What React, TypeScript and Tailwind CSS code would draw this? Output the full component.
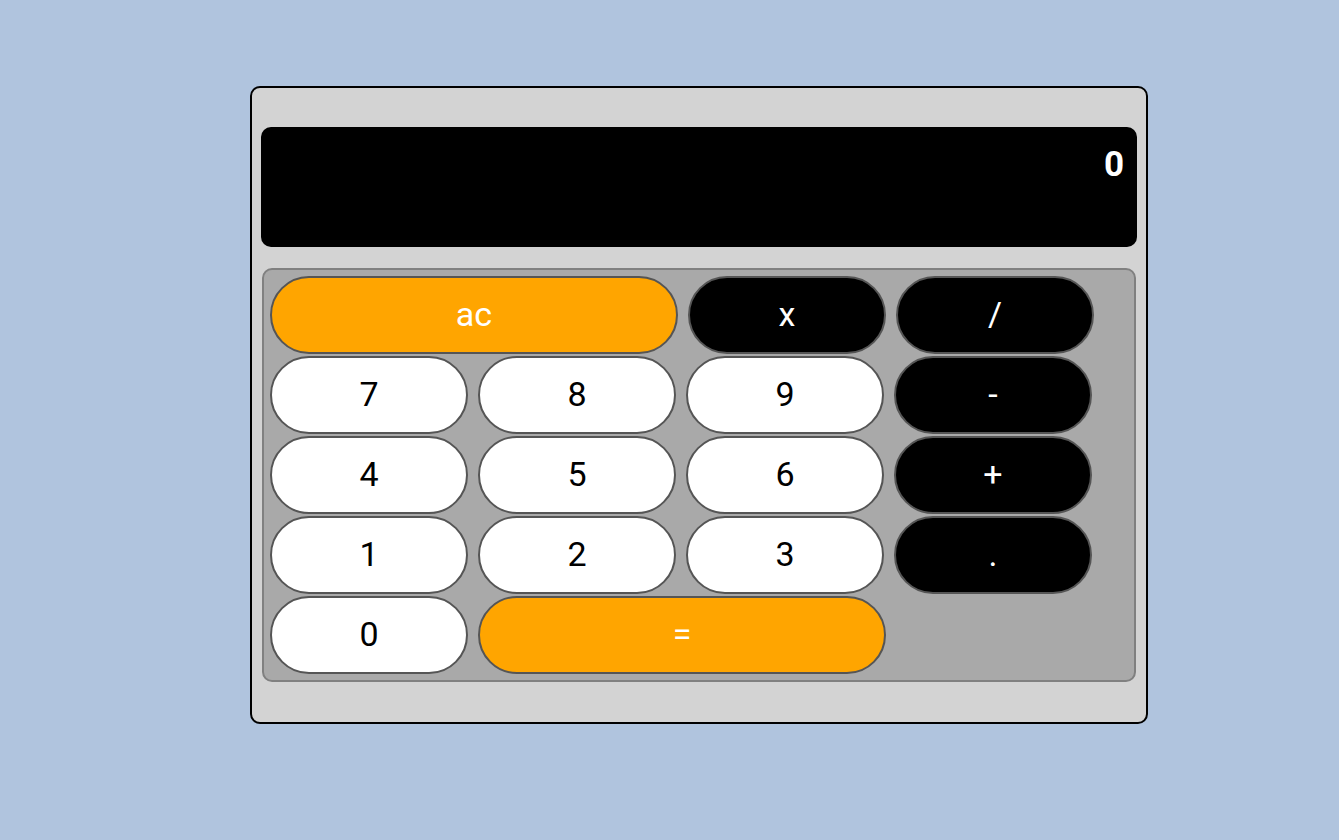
const font = { fontFamily: 'Roboto, "Liberation Sans", sans-serif' };

type Key = { label: string; kind: 'num' | 'op' | 'accent'; wide?: boolean };

const rows: Key[][] = [
  [
    { label: 'ac', kind: 'accent', wide: true },
    { label: 'x', kind: 'op' },
    { label: '/', kind: 'op' },
  ],
  [
    { label: '7', kind: 'num' },
    { label: '8', kind: 'num' },
    { label: '9', kind: 'num' },
    { label: '-', kind: 'op' },
  ],
  [
    { label: '4', kind: 'num' },
    { label: '5', kind: 'num' },
    { label: '6', kind: 'num' },
    { label: '+', kind: 'op' },
  ],
  [
    { label: '1', kind: 'num' },
    { label: '2', kind: 'num' },
    { label: '3', kind: 'num' },
    { label: '.', kind: 'op' },
  ],
  [
    { label: '0', kind: 'num' },
    { label: '=', kind: 'accent', wide: true },
  ],
];

function CalcButton({ k }: { k: Key }) {
  const color =
    k.kind === 'num'
      ? 'bg-white text-black'
      : k.kind === 'op'
        ? 'bg-black text-white'
        : 'bg-[#ffa500] text-white';
  return (
    <button
      type="button"
      className={`${k.wide ? 'w-[408px]' : 'w-[198px]'} h-[78px] shrink-0 rounded-full border-2 border-[#555555] pb-[3px] text-[34px] leading-none ${color}`}
      style={font}
    >
      {k.label}
    </button>
  );
}

export default function App() {
  return (
    <div className="min-h-[840px] w-full bg-[#b0c4de] pl-[250px] pt-[86px]" style={font}>
      <div className="flex h-[638px] w-[898px] flex-col rounded-[10px] border-2 border-black bg-[#d3d3d3] pl-[9px] pr-[9px] pt-[39px]">
        <div className="h-[120px] w-[876px] rounded-[10px] bg-black pr-[13px] pt-[18px] text-right text-[35px] font-bold leading-[40px] text-white">
          0
        </div>
        <div className="ml-[1px] mt-[21px] flex h-[414px] w-[874px] flex-col gap-[2px] rounded-[10px] border-2 border-[#808080] bg-[#a9a9a9] p-[6px]">
          {rows.map((row, i) => (
            <div key={i} className="flex gap-[10px]">
              {row.map((k) => (
                <CalcButton key={k.label} k={k} />
              ))}
            </div>
          ))}
        </div>
      </div>
    </div>
  );
}
